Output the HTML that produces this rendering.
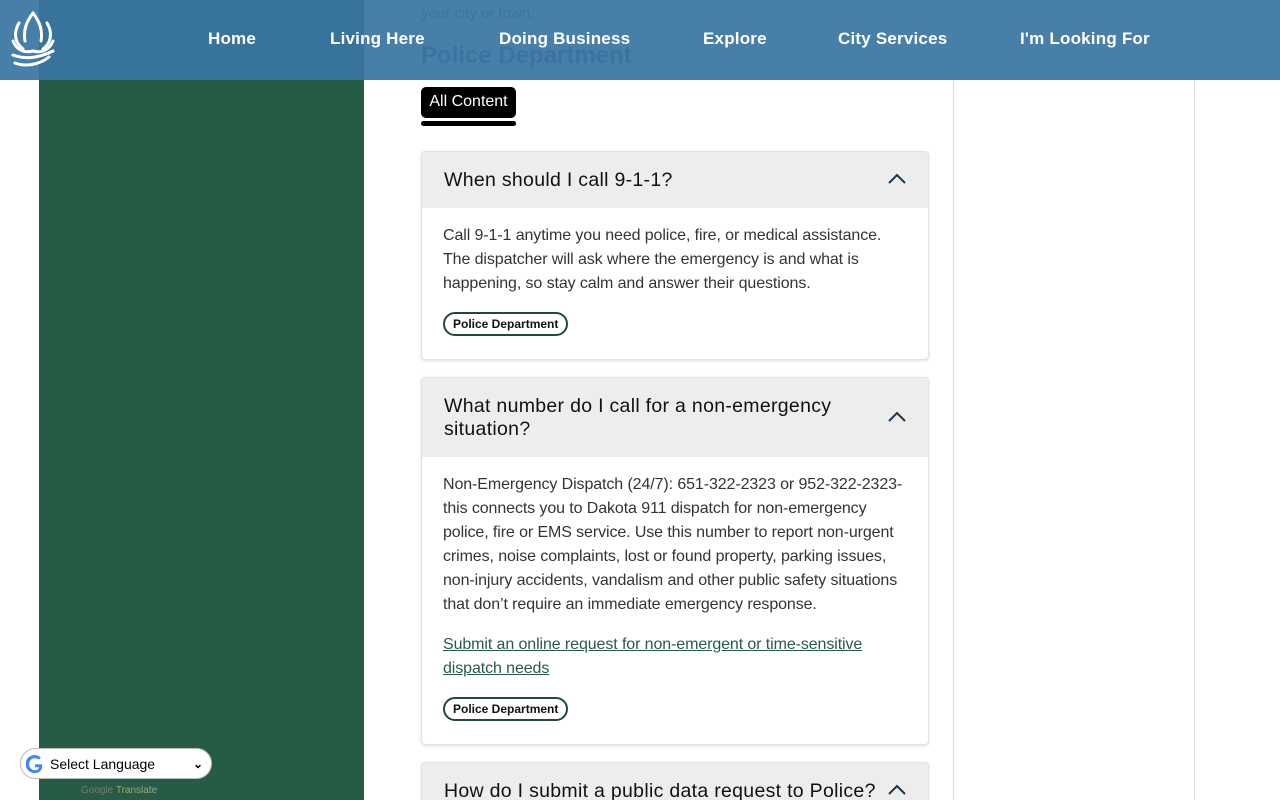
<!DOCTYPE html>
<html style="overflow:hidden;height:800px"><head><meta charset="utf-8"><style>
*{box-sizing:border-box;margin:0;padding:0}
body{width:1280px;height:800px;overflow:hidden;background:#fff;font-family:"Liberation Sans",sans-serif;position:relative}
.green{position:absolute;left:39px;top:0;width:325px;height:800px;background:#265c45}
.vl{position:absolute;top:0;height:800px;width:1px;background:#ddd}
.hdr{position:absolute;left:0;top:0;width:1280px;height:80px;background:rgba(58,117,163,0.93);z-index:5}
.nav{position:absolute;top:29px;color:#fff;font-weight:bold;font-size:17px;letter-spacing:0.2px}
.faded{position:absolute;color:#2b5a80;z-index:1}
.btn{position:absolute;left:421px;top:87px;width:95px;height:31px;background:#000;color:#fff;border-radius:5px;font-size:16px;line-height:29px;text-align:center}
.ul{position:absolute;left:421px;top:121px;width:95px;height:5px;background:#000;border-radius:3px}
.acc{position:absolute;left:421px;width:508px;border:1px solid #e2e2e2;border-radius:4px;box-shadow:0 1px 3px rgba(0,0,0,.12);background:#fff;overflow:hidden}
.ah{background:#ededed;padding:0 40px 0 22px;display:flex;align-items:center;font-size:19.5px;color:#111;position:relative;line-height:23px;letter-spacing:0.3px;white-space:nowrap}
.ah svg{position:absolute;right:22px;top:50%;margin-top:-7px}
.ab{padding:16px 10px 0 21px;font-size:16px;line-height:24px;color:#333;letter-spacing:-0.1px;white-space:nowrap}
.tag{display:inline-block;border:2px solid #1f4a3a;border-radius:12px;font-size:12px;font-weight:bold;padding:3px 8px;color:#111;line-height:14px;letter-spacing:0}
a{color:#265c45}
.sel{position:absolute;left:20px;top:748px;width:192px;height:31px;border:1px solid #bbb;border-radius:16px;background:#fff;font-size:14px;line-height:30px;padding-left:29px;z-index:6}
</style></head><body>
<div class="green"></div>
<div class="vl" style="left:953px"></div>
<div class="vl" style="left:1194px"></div>
<div class="faded" style="left:421px;top:5px;font-size:15px">your city or town.</div>
<div class="faded" style="left:421px;top:42px;font-size:24px;font-weight:bold">Police Department</div>
<div class="hdr">
<svg style="position:absolute;left:9px;top:11px" width="48" height="58" viewBox="0 0 48 58" fill="none" stroke="#fff" stroke-width="3" stroke-linecap="round">
<path d="M24 2 C18 10 14 18 16 30 M24 2 C30 10 34 18 32 30"/><path d="M10 12 C4 22 6 32 14 38 M38 12 C44 22 42 32 34 38"/><path d="M4 30 C8 40 16 42 24 40 C32 42 40 40 44 30"/><path d="M4 44 C14 48 28 48 44 40"/><path d="M6 52 C16 56 30 54 40 46"/></svg>
<div class="nav" style="left:208px">Home</div>
<div class="nav" style="left:330px">Living Here</div>
<div class="nav" style="left:499px">Doing Business</div>
<div class="nav" style="left:703px">Explore</div>
<div class="nav" style="left:838px">City Services</div>
<div class="nav" style="left:1020px">I'm Looking For</div>
</div>
<div class="btn">All Content</div><div class="ul"></div>
<div class="acc" style="top:151px;height:209px">
<div class="ah" style="height:56px">When should I call 9-1-1?<svg width="18" height="12" viewBox="0 0 18 12"><path d="M1 10 L9 2 L17 10" stroke="#1c3550" stroke-width="2" fill="none"/></svg></div>
<div class="ab">Call 9-1-1 anytime you need police, fire, or medical assistance.<br>The dispatcher will ask where the emergency is and what is<br>happening, so stay calm and answer their questions.<div style="margin-top:16px"><span class="tag">Police Department</span></div></div>
</div>
<div class="acc" style="top:377px;height:368px">
<div class="ah" style="height:79px">What number do I call for a non-emergency<br>situation?<svg width="18" height="12" viewBox="0 0 18 12"><path d="M1 10 L9 2 L17 10" stroke="#1c3550" stroke-width="2" fill="none"/></svg></div>
<div class="ab">Non-Emergency Dispatch (24/7): 651-322-2323 or 952-322-2323-<br>this connects you to Dakota 911 dispatch for non-emergency<br>police, fire or EMS service. Use this number to report non-urgent<br>crimes, noise complaints, lost or found property, parking issues,<br>non-injury accidents, vandalism and other public safety situations<br>that don’t require an immediate emergency response.<div style="margin-top:16px"><a href="#">Submit an online request for non-emergent or time-sensitive<br>dispatch needs</a></div><div style="margin-top:16px"><span class="tag">Police Department</span></div></div>
</div>
<div class="acc" style="top:762px;height:60px">
<div class="ah" style="height:56px">How do I submit a public data request to Police?<svg width="18" height="12" viewBox="0 0 18 12"><path d="M1 10 L9 2 L17 10" stroke="#1c3550" stroke-width="2" fill="none"/></svg></div>
</div>
<div class="sel"><svg style="position:absolute;left:5px;top:6px" width="18" height="18" viewBox="0 0 18 18"><path d="M16 9.2H9v3h4c-.5 2-2 3-4 3a6 6 0 1 1 3.9-10.6l2-2A9 9 0 1 0 9 18c4.5 0 8-3 7-8.8z" fill="#4285f4"/></svg>Select Language<span style="position:absolute;right:8px;top:0;font-size:12px;font-weight:bold">&#8964;</span></div>
<div style="position:absolute;left:81px;top:785px;font-size:10px;color:#777;z-index:6">Google <span style="color:#9a7">Translate</span></div>
</body></html>
